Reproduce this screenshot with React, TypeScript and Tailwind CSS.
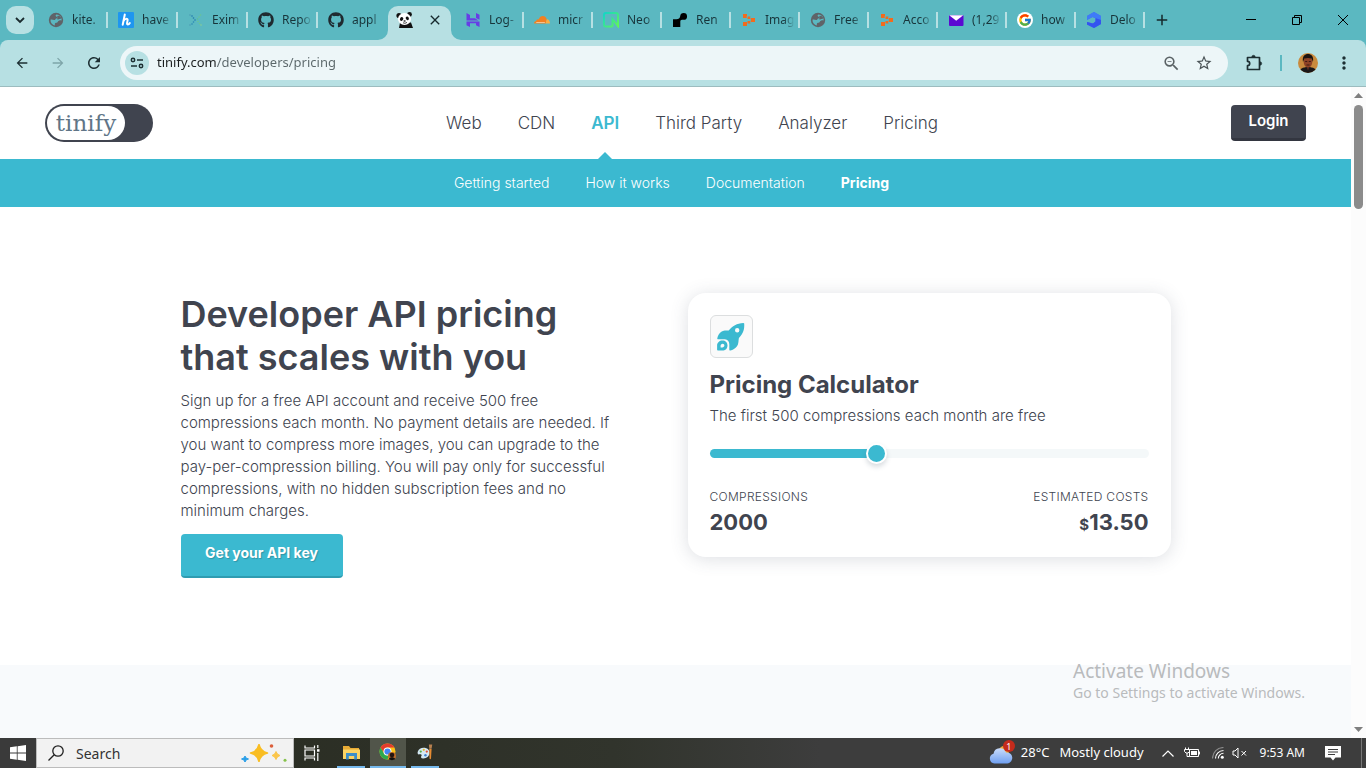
import { useState } from "react";
import type { ReactNode } from "react";
import { FaGithub } from "react-icons/fa";
import { FcGoogle } from "react-icons/fc";
import {
  MdArrowBack,
  MdArrowForward,
  MdRefresh,
  MdStarBorder,
  MdMoreVert,
  MdOutlineZoomOut,
  MdClose,
  MdAdd,
} from "react-icons/md";

const UI = "font-['Noto_Sans','Open_Sans',sans-serif]";
const SITE = "font-['Inter','Liberation_Sans',sans-serif]";

/* ---------- favicons ---------- */

function GlobeIcon() {
  return (
    <svg viewBox="0 0 16 16" className="size-4">
      <circle cx="8" cy="8" r="7.2" fill="#5f6368" />
      <path d="M8.500 2.600C7.200 3.300 7.400 4.500 8.600 4.800c1.100.3.600 1.600-.3 1.700-1.100.1-.7 1.200-1.600 1.500-1.200.3-2.800-.8-4.200-.2-.1 3.200 1.900 5.200 4.300 5.700.2-1.300-.3-1.800.6-2.500.8-.6 1.800-.2 2.300-1.100.4-.9 1.100-.7 1.700-1.300.5-.5 1.300-.3 2.200-.2.300-3-1.900-5.600-5.100-5.800z" fill="#5bb8c1" />
      <path d="M9.800 3.800c1.700-.4 3 .9 3.500 2.600-.9.700-1.900.3-2.700.9-.8.600-1.600 0-1.300-.8.200-.7-.5-2.300.5-2.700z" fill="#5f6368" />
    </svg>
  );
}

function HashIcon() {
  return (
    <svg viewBox="0 0 16 16" className="size-4">
      <rect width="16" height="16" rx="1" fill="#1e96f0" />
      <path d="M6.800 2.500 4.700 12.800M5.400 9.200c1.300-2.500 4.500-3.300 4.200-1-.2 1.500-1.300 4.400.3 4.300.8 0 1.500-.7 1.900-1.400" fill="none" stroke="#fff" strokeWidth="2" strokeLinecap="round" />
    </svg>
  );
}

const eximDots: [number, number, string][] = [
  [2, 3, "#4b9bb5"], [4, 4, "#1f78ad"], [5.5, 6, "#1f78ad"], [7, 8, "#1f78ad"], [5.5, 10, "#2a86b4"], [4, 12, "#2a86b4"], [2, 13, "#4b9bb5"],
  [12.5, 3, "#6cc58f"], [11, 5, "#6cc58f"], [9.5, 7, "#5dbd93"], [10, 9.5, "#6cc58f"], [11.5, 11.5, "#6cc58f"], [13, 13, "#8bd08f"],
];

function EximIcon() {
  return (
    <svg viewBox="0 0 16 16" className="size-4">
      {eximDots.map(([x, y, c]) => (
        <circle key={`${x}-${y}`} cx={x} cy={y} r=".8" fill={c} />
      ))}
    </svg>
  );
}

function PandaIcon() {
  return (
    <svg viewBox="0 0 18 16" className="h-4 w-[18px]">
      <path d="M4 10.500h11l2 5.500H3z" fill="#111" />
      <circle cx="3" cy="3.500" r="2.600" fill="#111" />
      <circle cx="13.500" cy="2.500" r="2.400" fill="#111" />
      <ellipse cx="8.500" cy="7" rx="6.500" ry="6" fill="#fff" />
      <ellipse cx="5.600" cy="7" rx="1.600" ry="1.900" fill="#111" transform="rotate(30 5.600 7)" />
      <ellipse cx="11.300" cy="6.300" rx="1.500" ry="1.900" fill="#111" transform="rotate(-30 11.300 6.300)" />
      <ellipse cx="8.600" cy="9" rx="1.200" ry=".8" fill="#222" />
      <path d="M7 10.800q2 1.200 4-.4" stroke="#333" strokeWidth=".9" fill="none" />
    </svg>
  );
}

function HostingerIcon() {
  return (
    <svg viewBox="0 0 16 16" className="size-4" fill="#673de6">
      <path d="M1.500 1l3.500 2v3.200h5l3.500 2.200H1.500zM11 1l3.500 1.800v5L11 6zM1.500 9.400h13V15L11 13.200v-2H5V15l-3.500-1.800z" />
    </svg>
  );
}

function CloudIcon() {
  return (
    <svg viewBox="0 0 16 16" className="size-4">
      <path d="M0 11.500c0-1.500 1-2.300 2.300-2.400C2.300 7.800 3.500 7 4.600 7.500 5.500 5 7 4 8.800 4c2 0 3.600 1.400 3.900 3.500l-.9 4z" fill="#f38020" />
      <path d="M11.500 11.500l1.300-4.300c1.900.1 3.200 1.800 3.200 4.300z" fill="#fbad41" />
      <path d="M2.500 9.900l8.500.2-.3.700H2z" fill="#f7d9b5" />
    </svg>
  );
}

function NeonIcon() {
  return (
    <svg viewBox="0 0 16 16" className="size-4">
      <defs>
        <linearGradient id="neon" x1="0" y1="0" x2="1" y2="1">
          <stop offset="0" stopColor="#12d6c8" />
          <stop offset="1" stopColor="#62f755" />
        </linearGradient>
      </defs>
      <path d="M9.500 14.600H3a2 2 0 0 1-2-2V3a2 2 0 0 1 2-2h10a2 2 0 0 1 2 2v11l-5.500-7v7.600" fill="none" stroke="url(#neon)" strokeWidth="2" />
    </svg>
  );
}

function RenderIcon() {
  return (
    <svg viewBox="0 0 16 16" className="size-4">
      <path d="M11.700 1.100a3.500 3.500 0 0 0-3.500 3.200C8 6.300 6.500 7.300 4.500 7.300H1V15h7.300V9.500c0-1 .7-1.700 1.700-1.700h1.700a3.350 3.350 0 0 0 0-6.700z" fill="#000" />
    </svg>
  );
}

function BlocksIcon() {
  return (
    <svg viewBox="0 0 16 16" className="size-4" fill="#f26b1d">
      <path d="M2 2h4v4H2zM6.500 4.500h3v2.500h-3zM9.500 6h4.500v4H9.500zM6.500 9h3v2.500h-3zM2 10h4v4H2z" />
      <path d="M6 4v2M9.500 5v6" stroke="#5bb8c1" strokeWidth=".6" />
    </svg>
  );
}

function MailIcon() {
  return (
    <svg viewBox="0 0 16 16" className="size-4">
      <rect x="1" y="3" width="14.500" height="11" rx="1" fill="#5b09d2" />
      <path d="M1.200 3.200h14L8.200 8.800z" fill="#fff" />
    </svg>
  );
}

function GoogleIcon() {
  return (
    <span className="flex size-4 items-center justify-center rounded-full bg-white">
      <FcGoogle className="size-3.5" />
    </span>
  );
}

function CubeIcon() {
  return (
    <svg viewBox="0 0 16 16" className="size-4">
      <path d="M8 0l7 4v8l-7 4-7-3.500V10l6 1.500 2.500-2V6.300L6.500 5 1 8V4z" fill="#4168f5" />
      <path d="M8 0l7 4v4L6.500 5 1 8V4z" fill="#3f7bf8" />
      <path d="M9.500 6.300 15 8v4l-7 4-7-3.500V10l6 1.500 2.500-2z" fill="#3453f0" />
    </svg>
  );
}

/* ---------- browser chrome ---------- */

type Tab = { title: string; icon: ReactNode };

const tabsBefore: Tab[] = [
  { title: "kite.", icon: <GlobeIcon /> },
  { title: "have", icon: <HashIcon /> },
  { title: "Exim", icon: <EximIcon /> },
  { title: "Repo", icon: <FaGithub className="size-4 text-[#1f2a30]" /> },
  { title: "appl", icon: <FaGithub className="size-4 text-[#1f2a30]" /> },
];

const tabsAfter: Tab[] = [
  { title: "Log-", icon: <HostingerIcon /> },
  { title: "micr", icon: <CloudIcon /> },
  { title: "Neo", icon: <NeonIcon /> },
  { title: "Ren", icon: <RenderIcon /> },
  { title: "Imag", icon: <BlocksIcon /> },
  { title: "Free", icon: <GlobeIcon /> },
  { title: "Acco", icon: <BlocksIcon /> },
  { title: "(1,29", icon: <MailIcon /> },
  { title: "how", icon: <GoogleIcon /> },
  { title: "Delo", icon: <CubeIcon /> },
];

function BackgroundTab({ tab, width, separator = true }: { tab: Tab; width: string; separator?: boolean }) {
  return (
    <button type="button" className={`flex h-10 flex-1 items-center pl-2.5 ${width}`}>
      <span className="mr-2 shrink-0">{tab.icon}</span>
      <span className="min-w-0 flex-1 bg-linear-to-r from-[#17343a] from-55% to-transparent to-90% bg-clip-text text-left text-xs whitespace-nowrap text-transparent">
        {tab.title}
      </span>
      <span className={separator ? "h-4 w-0.5 bg-[#b7e0e3]" : "w-0.5"} />
    </button>
  );
}

function TabStrip() {
  return (
    <div className="flex h-10 items-center bg-[#5bb8c1]">
      <button type="button" aria-label="Search tabs" className="mr-1 ml-1.5 flex size-7 shrink-0 items-center justify-center rounded-[10px] bg-[#b7e0e3]">
        <svg viewBox="0 0 10 10" className="size-2.5" fill="none" stroke="#1a2a2e" strokeWidth="1.800">
          <path d="M1 3l4 4 4-4" />
        </svg>
      </button>
      {tabsBefore.map((t, i) => (
        <BackgroundTab key={t.title} tab={t} width="max-w-[70px]" separator={i < 4} />
      ))}
      <div className="relative mr-1 flex h-[34px] w-[63px] shrink-0 items-center justify-between self-end rounded-t-[10px] bg-[#b7e0e3] pr-2 pb-1.5 pl-2">
        <svg viewBox="0 0 10 10" className="absolute bottom-0 -left-2.5 size-2.5" fill="#b7e0e3">
          <path d="M10 0v10H0A10 10 0 0 0 10 0z" />
        </svg>
        <svg viewBox="0 0 10 10" className="absolute -right-2.5 bottom-0 size-2.5" fill="#b7e0e3">
          <path d="M0 0v10h10A10 10 0 0 1 0 0z" />
        </svg>
        <PandaIcon />
        <button type="button" aria-label="Close tab">
          <MdClose className="size-4 text-[#16292d]" />
        </button>
      </div>
      {tabsAfter.map((t) => (
        <BackgroundTab key={t.title} tab={t} width="max-w-[69px]" />
      ))}
      <button type="button" aria-label="New tab" className="ml-2">
        <MdAdd className="size-[18px] text-[#16292d]" />
      </button>
      <div className="ml-auto flex shrink-0">
        <button type="button" aria-label="Minimize" className="flex h-10 w-[46px] items-center justify-center">
          <svg viewBox="0 0 10 10" className="size-2.5" stroke="#000">
            <path d="M0 4.500h10" />
          </svg>
        </button>
        <button type="button" aria-label="Restore" className="flex h-10 w-[46px] items-center justify-center">
          <svg viewBox="0 0 10 10" className="size-2.5" stroke="#000" fill="none">
            <path d="M.5 2.500h7v7h-7zM2.500 2.500v-2h7v7h-2" />
          </svg>
        </button>
        <button type="button" aria-label="Close" className="flex h-10 w-[46px] items-center justify-center">
          <svg viewBox="0 0 10 10" className="size-2.5" stroke="#000">
            <path d="M0 0l10 10M10 0L0 10" />
          </svg>
        </button>
      </div>
    </div>
  );
}

function Toolbar() {
  return (
    <div className="bg-[#5bb8c1]">
      <div className="flex h-[47px] items-center rounded-t-lg border-b border-[#9cbcbf] bg-[#b7e0e3] pr-3 pl-3.5 text-[#1d2f33]">
        <button type="button" aria-label="Back" className="mr-5">
          <MdArrowBack className="size-4" />
        </button>
        <button type="button" aria-label="Forward" className="mr-[19px] text-[#7ea5a9]">
          <MdArrowForward className="size-4" />
        </button>
        <button type="button" aria-label="Reload" className="mr-[17px]">
          <MdRefresh className="size-[18px]" />
        </button>
        <div className="flex h-[34px] flex-1 items-center rounded-full bg-[#edf6f8] pr-[15px] pl-[5px]">
          <button type="button" aria-label="Site information" className="mr-2 flex size-6 items-center justify-center rounded-full bg-[#b7e0e3]">
            <svg viewBox="0 0 14 12" className="h-3 w-3.5" fill="none" stroke="#1d2f33" strokeWidth="1.500">
              <circle cx="3" cy="3" r="1.700" />
              <path d="M7 3h6M1 9h6" />
              <circle cx="11" cy="9" r="1.700" />
            </svg>
          </button>
          <label htmlFor="address" className="sr-only">Address</label>
          <input
            id="address"
            defaultValue="tinify.com/developers/pricing"
            className="min-w-0 flex-1 bg-linear-to-r from-[#1b1f20] from-[60px] to-[#5b676a] to-[60px] bg-clip-text text-[13px] text-transparent outline-none"
          />
          <button type="button" aria-label="Zoom" className="mr-3.5">
            <MdOutlineZoomOut className="size-[19px] text-[#5a6265]" />
          </button>
          <button type="button" aria-label="Bookmark">
            <MdStarBorder className="size-[18px] text-[#4a5356]" />
          </button>
        </div>
        <button type="button" aria-label="Extensions" className="ml-[17px]">
          <svg viewBox="0 0 19 19" className="size-[19px]" fill="none" stroke="#1d2f33" strokeWidth="1.700" strokeLinejoin="round">
            <path d="M2.500 3.500h12v12h-12v-3.800a2.200 2.200 0 0 0 0-4.400z" />
            <path d="M6.800 3a1.700 1.700 0 0 1 3.400 0zM15 7.800a1.700 1.700 0 0 1 0 3.400z" fill="#1d2f33" strokeWidth=".6" />
          </svg>
        </button>
        <span className="mx-4 h-4 w-0.5 bg-[#5bb8c1]" />
        <button type="button" aria-label="Profile" className="mr-4">
          <svg viewBox="0 0 20 20" className="size-5">
            <clipPath id="avatar"><circle cx="10" cy="10" r="10" /></clipPath>
            <g clipPath="url(#avatar)">
              <rect width="20" height="20" fill="#c98a3d" />
              <path d="M1 20c0-4 4-6 9-6s9 2 9 6z" fill="#1a1718" />
              <ellipse cx="10" cy="9" rx="4.300" ry="5.800" fill="#8e4226" />
              <path d="M5 9C4 3 7 1 10 1s6 2 5 8l-1.500-3.500q-3.500-1-7 0z" fill="#1c1210" />
              <path d="M7.200 8.500h2M10.800 8.500h2M8.500 12h3" stroke="#3d1a12" strokeWidth="1" />
              <path d="M9 14.500l1 3 1-3z" fill="#6d3020" />
            </g>
          </svg>
        </button>
        <button type="button" aria-label="Menu">
          <MdMoreVert className="size-5" />
        </button>
      </div>
    </div>
  );
}

/* ---------- site ---------- */

const mainLinks = ["Web", "CDN", "API", "Third Party", "Analyzer", "Pricing"];
const subLinks = ["Getting started", "How it works", "Documentation", "Pricing"];

function SiteHeader() {
  return (
    <header>
      <div className="flex h-[72px] items-center justify-between bg-white px-[45px]">
        <a href="#home" className="flex h-[38px] w-[108px] rounded-full bg-[#40444f] p-0.5">
          <span className="flex w-[78px] items-center justify-center rounded-full bg-white font-['DejaVu_Serif',serif] text-[23px] leading-none text-[#607587]">
            tinify
          </span>
        </a>
        <nav className="flex items-center gap-9 text-[17px] font-light text-[#40444f]">
          {mainLinks.map((l) =>
            l === "API" ? (
              <a key={l} href="#api" className="relative flex h-[72px] items-center pt-0.5 font-semibold text-[#3bb9d0]">
                {l}
                <svg viewBox="0 0 14 7" className="absolute bottom-0 left-1/2 h-[7px] w-3.5 -translate-x-1/2" fill="#3bb9d0">
                  <path d="M7 0l7 7H0z" />
                </svg>
              </a>
            ) : (
              <a key={l} href="#nav" className="pt-0.5">{l}</a>
            )
          )}
        </nav>
        <button type="button" className="h-9 w-[75px] rounded border-b-[3px] border-[#333640] bg-[#40444f] text-[15px] font-semibold text-white">
          Login
        </button>
      </div>
      <nav className="flex h-12 items-center justify-center gap-9 bg-[#3bb9d0] pr-2 text-sm text-white">
        {subLinks.map((l) => (
          <a key={l} href="#sub" className={l === "Pricing" ? "font-bold" : "font-light"}>{l}</a>
        ))}
      </nav>
    </header>
  );
}

const steps = [500, 1000, 1500, 2000, 3000, 5000, 10000, 20000, 50000];

function costOf(n: number) {
  const first = Math.min(n, 10000) - 500;
  const rest = Math.max(n - 10000, 0);
  return (first * 0.009 + rest * 0.002).toFixed(2);
}

function Calculator() {
  const [step, setStep] = useState(3);
  const pct = (step / (steps.length - 1)) * 100;
  return (
    <section className="w-[483px] rounded-[18px] bg-white px-[22px] pt-[22px] pb-4 shadow-[0_2px_18px_rgba(64,80,100,0.18)]">
      <div className="flex size-[43px] items-center justify-center rounded-md border border-[#dcdedf] bg-[#fafafa]">
        <svg viewBox="0 0 28 28" className="size-7" fill="#3bb9d0">
          <path fillRule="evenodd" d="M27.200.6c.4 5.200-.7 10.100-5.300 14.300-.5 2.600-.2 5.900-1.900 8.400-1.600 2.300-4.300 3.800-6.600 4.300-.8.100-1.100-.4-1.100-1v-5.500c0-2.600-1.700-4.700-4.400-4.800H1.300c-.8 0-1.200-.4-1-1.100.6-2.600 1.900-5 4-6.500 2-1.300 4.700-1 7.400-1.100C15.300 2.900 20 .4 26.300 0c.6 0 .9.200.9.600zM20.200 5a2.200 2.200 0 1 0 0 4.400 2.200 2.200 0 0 0 0-4.400z" />
          <path fillRule="evenodd" d="M5.500 17.500c2.900 0 5 2.100 5 4.900 0 3-2.100 5.200-5.200 5.200H.9c-.5 0-.8-.3-.8-.8v-4.300c0-2.900 2.400-5 5.400-5zm.1 3.200c-1.200 0-2 1-2 2.100v1.600h1.700c1.200 0 2.100-.8 2.100-1.900 0-1-.8-1.800-1.800-1.800z" />
        </svg>
      </div>
      <h2 className="mt-[13px] text-2xl leading-7 font-bold text-[#40444f]">Pricing Calculator</h2>
      <label htmlFor="volume" className="mt-[7px] block text-[15px] leading-5 font-light text-[#40444f]">
        The first 500 compressions each month are free
      </label>
      <input
        id="volume"
        type="range"
        min={0}
        max={steps.length - 1}
        value={step}
        onChange={(e) => setStep(Number(e.target.value))}
        style={{ backgroundImage: `linear-gradient(to right, #3bb9d0 ${pct}%, #f4f8f9 ${pct}%)` }}
        className="mt-[23px] block h-[9px] w-full appearance-none rounded-full outline-none [&::-webkit-slider-thumb]:size-[21px] [&::-webkit-slider-thumb]:appearance-none [&::-webkit-slider-thumb]:rounded-full [&::-webkit-slider-thumb]:border-2 [&::-webkit-slider-thumb]:border-white [&::-webkit-slider-thumb]:bg-[#3bb9d0] [&::-webkit-slider-thumb]:shadow-[0_3px_5px_rgba(60,80,100,0.2)]"
      />
      <div className="mt-[30px] flex justify-between text-[#40444f]">
        <div>
          <div className="text-xs leading-[18px] font-light tracking-wide">COMPRESSIONS</div>
          <div className="text-[22px] leading-8 font-bold">{steps[step]}</div>
        </div>
        <div className="text-right">
          <div className="text-xs leading-[18px] font-light tracking-wide">ESTIMATED COSTS</div>
          <div className="text-[22px] leading-8 font-bold">
            <span className="text-[15px]">$</span>
            {costOf(steps[step])}
          </div>
        </div>
      </div>
    </section>
  );
}

function Hero() {
  return (
    <main className="bg-white pt-[86px] pb-[87px]">
      <div className="mx-auto flex max-w-[990px] items-start justify-between">
        <section className="w-[450px]">
          <h1 className="text-[36px] leading-[43px] font-semibold text-[#40444f]">
            Developer API pricing
            <br />
            that scales with you
          </h1>
          <p className="mt-[11px] text-[15px] leading-[22px] font-light text-[#40444f]">
            Sign up for a free API account and receive 500 free
            <br />
            compressions each month. No payment details are needed. If
            <br />
            you want to compress more images, you can upgrade to the
            <br />
            pay-per-compression billing. You will pay only for successful
            <br />
            compressions, with no hidden subscription fees and no
            <br />
            minimum charges.
          </p>
          <button type="button" className="mt-3 h-11 w-[162px] rounded border-b-2 border-[#2f9cb1] bg-[#3bb9d0] pb-1 text-sm font-bold text-white text-shadow-[1px_1px_1px_rgba(0,0,0,0.2)]">
            Get your API key
          </button>
        </section>
        <Calculator />
      </div>
    </main>
  );
}

function Scrollbar() {
  return (
    <div className="flex w-[15px] shrink-0 flex-col items-center justify-between bg-[#fcfcfc] py-1.5">
      <div className="flex flex-col items-center gap-[7px]">
        <svg viewBox="0 0 9 5" className="h-[5px] w-[9px]" fill="#7f7f7f"><path d="M4.500 0L9 5H0z" /></svg>
        <div className="h-[104px] w-[9px] rounded-full bg-[#8b8b8b]" />
      </div>
      <svg viewBox="0 0 9 5" className="h-[5px] w-[9px]" fill="#7f7f7f"><path d="M4.500 5L9 0H0z" /></svg>
    </div>
  );
}

/* ---------- taskbar ---------- */

function Taskbar() {
  return (
    <footer className="flex h-[30px] items-center bg-linear-to-r from-[#2b2e24] from-20% via-[#31342c] via-45% to-[#3d3d3d] to-60% text-white">
      <button type="button" aria-label="Start" className="flex h-full w-9 items-center justify-center bg-[#3a3a3a]">
        <svg viewBox="0 0 16 16" className="size-4" fill="#fff">
          <path d="M0 2.300l6.800-1v6.300H0zM7.600 1.200L16 0v7.600H7.600zM0 8.400h6.800v6.300L0 13.700zM7.600 8.400H16V16l-8.400-1.200z" />
        </svg>
      </button>
      <div className="flex h-full w-[258px] items-center border border-[#bcbcbc] bg-[#f2f2f2] pr-1.5 pl-[11px]">
        <svg viewBox="0 0 16 16" className="mr-3 size-4 shrink-0" fill="none" stroke="#222" strokeWidth="1.300">
          <circle cx="10" cy="6" r="5.200" />
          <path d="M6.200 9.800L.5 15.500" />
        </svg>
        <label htmlFor="search" className="sr-only">Search</label>
        <input id="search" placeholder="Search" className="min-w-0 flex-1 bg-transparent text-[14px] text-[#333] outline-none placeholder:text-[#333]" />
        <svg viewBox="0 0 46 18" className="h-[18px] w-[46px] shrink-0">
          <path d="M18 .5q1.500 7 8.500 8.500-7 1.500-8.500 8.500-1.500-7-8.500-8.500 7-1.500 8.500-8.500z" fill="#f9bd22" stroke="#f9bd22" strokeWidth="1.500" strokeLinejoin="round" />
          <path d="M35 7.500q.9 3.200 4 4-3.100.8-4 4-.9-3.200-4-4 3.100-.8 4-4z" fill="#fbc64b" stroke="#fbc64b" strokeLinejoin="round" />
          <path d="M4 12l1 2 2.500 1-2.500 1-1 2.200-1-2.200-2.500-1 2.500-1z" fill="#2a9fe8" stroke="#2a9fe8" />
          <circle cx="30.500" cy="2" r="1.800" fill="#dc5f3b" />
          <circle cx="44" cy="16.200" r="1.500" fill="#86c24b" />
        </svg>
      </div>
      <button type="button" aria-label="Task view" className="flex h-full w-9 items-center justify-center">
        <svg viewBox="0 0 16 16" className="size-4" fill="none" stroke="#fff" strokeWidth="1.200">
          <path d="M1 .5v2.500h9.500V.5M1 5h9.500v6H1zM1 15.500v-2.500h9.500v2.500M13.800 0v3M13.800 8v8" />
          <path d="M13 4.200h2.500v2.500H13z" fill="#fff" stroke="none" />
        </svg>
      </button>
      <div className="flex h-full items-center">
        <button type="button" aria-label="File Explorer" className="mr-[5px] ml-[7px] flex h-full w-7 items-center justify-center border-b-2 border-[#76b9ed]">
          <svg viewBox="0 0 17 15" className="h-[15px] w-[17px]">
            <path d="M0 1h6l1.500 2H16v11H0z" fill="#e8ab35" />
            <path d="M0 4.500h17V14H0z" fill="#fcd464" />
            <path d="M3 8h11v6.500h-2.800V11H5.800v3.500H3z" fill="#3d8fc9" />
          </svg>
        </button>
        <button type="button" aria-label="Chrome" className="flex h-full w-9 items-center justify-center border-b-2 border-[#76b9ed] bg-[#51554a]">
          <svg viewBox="0 0 18 18" className="size-[18px]">
            <circle cx="8.500" cy="8.500" r="8" fill="#fbc116" />
            <path d="M8.500.5a8 8 0 0 1 6.930 4H8.500a4 4 0 0 0-3.460 6L1.570 4.500A8 8 0 0 1 8.500.5z" fill="#e33b2e" />
            <path d="M1.570 4.500l3.470 6a4 4 0 0 0 5 1.700L8.500 16.500a8 8 0 0 1-6.930-12z" fill="#2da94f" />
            <circle cx="8.500" cy="8.500" r="4" fill="#fff" />
            <circle cx="8.500" cy="8.500" r="3.100" fill="#4285f4" />
            <circle cx="13" cy="13" r="4" fill="#bb6b2b" />
            <circle cx="13" cy="12" r="2.300" fill="#241510" />
            <path d="M9.800 16c1-2.500 5.400-2.500 6.400 0-1.500 1.500-5 1.500-6.400 0z" fill="#111" />
          </svg>
        </button>
        <button type="button" aria-label="Paint" className="mx-[5px] flex h-full w-7 items-center justify-center border-b-2 border-[#76b9ed]">
          <svg viewBox="0 0 17 17" className="size-4">
            <path d="M7 4c4 0 6.500 2.300 6.300 5.500C13 13 10 15.500 6.500 15.300 4 15.200 3.900 13.500 4.800 12.400 5.500 11.200 4 10.500 2.500 11 .8 11.300.3 9.800.8 8.200 1.600 5.500 4.200 4 7 4z" fill="#d4e8f4" />
            <circle cx="4" cy="8" r="1.200" fill="#58b04a" />
            <circle cx="7.200" cy="6.200" r="1.200" fill="#e7b92e" />
            <circle cx="10.400" cy="8" r="1.200" fill="#df5139" />
            <circle cx="9" cy="12" r="1.300" fill="#3e80cf" />
            <path d="M13 5l2.500.2-.6 10c-.1 1.200-1.600 1.200-1.600 0z" fill="#e58b32" />
            <path d="M12.600.5h3.600L15.500 5h-2.400z" fill="#b68050" />
          </svg>
        </button>
      </div>
      <div className="ml-auto flex h-full shrink-0 items-center">
        <button type="button" className="mr-[18px] flex items-center text-[13px] whitespace-nowrap">
          <span className="relative mr-2 block h-[22px] w-6">
            <svg viewBox="0 0 24 22" className="h-[22px] w-6">
              <defs>
                <linearGradient id="cloud" x1="0" y1="0" x2="0" y2="1">
                  <stop offset="0" stopColor="#c9dcfb" />
                  <stop offset="1" stopColor="#6f9ff0" />
                </linearGradient>
              </defs>
              <circle cx="15" cy="9" r="5" fill="#f0a838" />
              <path d="M5.500 21.500a5 5 0 0 1-1-9.800A6.500 6.500 0 0 1 17 10.500a5.500 5.500 0 0 1 1.500 11z" fill="url(#cloud)" />
            </svg>
            <span className="absolute -top-0.5 -right-0.5 flex size-3 items-center justify-center rounded-full bg-[#c42b1c] text-[9px] leading-none">1</span>
          </span>
          <span className="mr-2.5">28°C</span>
          <span>Mostly cloudy</span>
        </button>
        <button type="button" aria-label="Hidden icons" className="mr-2.5">
          <svg viewBox="0 0 12 7" className="h-[7px] w-3" fill="none" stroke="#fff" strokeWidth="1.200"><path d="M.5 6.500L6 1l5.500 5.500" /></svg>
        </button>
        <svg viewBox="0 0 16 12" className="mr-3 h-3 w-4" fill="none" stroke="#fff">
          <path d="M5.500 2.500h9v7h-9z" />
          <path d="M7 4h6v4H7zM15 4.500h1v3h-1z" fill="#fff" stroke="none" />
          <path d="M1.500.5v2M4.500.5v2M.5 2.500h5v2L4 6H2L.5 4.500zM3 6v3.500h2.500" />
        </svg>
        <svg viewBox="0 0 12 12" className="mr-2 size-3" fill="none" strokeWidth="1.100">
          <path d="M.5 11.500a11 11 0 0 1 11-11" stroke="#8b8b8b" />
          <path d="M3.500 11.500a8 8 0 0 1 8-8M6.300 11.500a5.200 5.200 0 0 1 5.200-5.200" stroke="#fff" />
          <circle cx="10.300" cy="10.300" r="1.500" fill="#fff" />
        </svg>
        <svg viewBox="0 0 16 12" className="mr-3 h-3 w-4" fill="none" stroke="#fff">
          <path d="M1 4h2l3-3v10L3 8H1zM9.500 4l4.500 4.500M14 4L9.500 8.500" />
        </svg>
        <time className="mr-5 text-xs whitespace-nowrap">9:53 AM</time>
        <button type="button" aria-label="Notifications" className="mr-5">
          <svg viewBox="0 0 16 16" className="size-4">
            <path d="M0 1h16v11.500h-5.500L8 15.500l-2.500-3H0z" fill="#fff" />
            <path d="M3 4.500h10M3 7h10M3 9.500h7" stroke="#3d3d3d" />
          </svg>
        </button>
        <span className="mr-1 h-full w-px bg-[#777]" />
      </div>
    </footer>
  );
}

export default function App() {
  return (
    <div className={`flex min-h-screen flex-col ${UI}`}>
      <TabStrip />
      <Toolbar />
      <div className="relative flex flex-1">
        <div className={`flex flex-1 flex-col bg-[#f8fafc] ${SITE}`}>
          <SiteHeader />
          <Hero />
        </div>
        <Scrollbar />
        <div className="pointer-events-none absolute right-[57px] bottom-[35px] min-w-[236px] text-[#b9bbbd]">
          <p className="text-[19px] leading-6">Activate Windows</p>
          <p className="text-sm leading-5">Go to Settings to activate Windows.</p>
        </div>
      </div>
      <Taskbar />
    </div>
  );
}
